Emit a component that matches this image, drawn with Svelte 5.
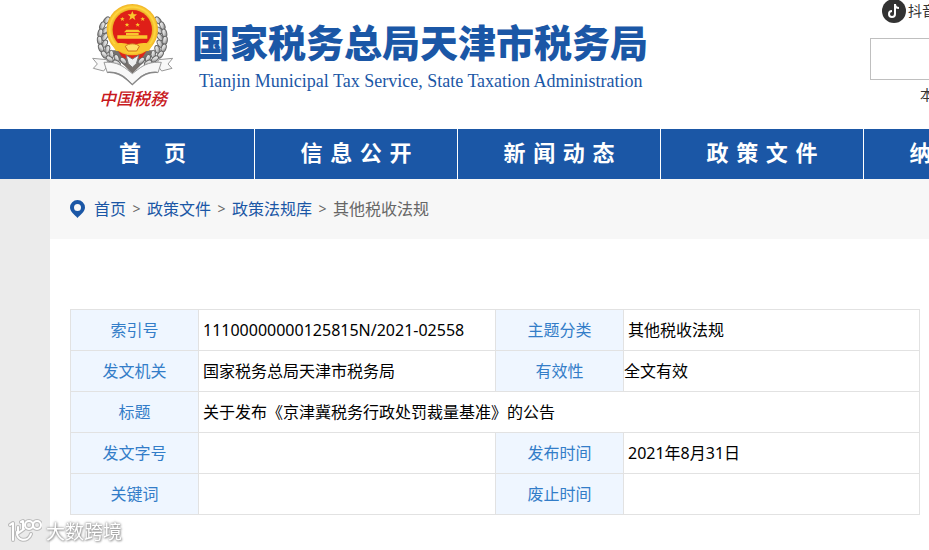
<script lang="ts">
	const navItems = ['首   页', '信 息 公 开', '新 闻 动 态', '政 策 文 件', '纳 税 服 务'];

	const crumbs = ['首页', '政策文件', '政策法规库'];

	// Wreath leaves down the right side of the emblem, mirrored for the left
	const leaves = [
		[234, 60, -40],
		[247, 76, -25],
		[238, 90, -50],
		[253, 98, -15],
		[240, 110, -40],
		[255, 120, 5],
		[240, 130, -30],
		[251, 143, 20],
		[232, 147, -15],
		[241, 163, 35],
		[220, 162, 0],
		[225, 176, 50],
		[204, 174, 15],
		[204, 188, 60],
		[184, 181, 40]
	];
</script>

<header class="header">
	<div class="emblem">
		<svg width="82" height="84" viewBox="36 8 246 252" aria-hidden="true">
			<defs>
				<linearGradient id="silver" x1="0" y1="0" x2="1" y2="1">
					<stop offset="0" stop-color="#ffffff" />
					<stop offset="0.5" stop-color="#d2d2d2" />
					<stop offset="1" stop-color="#666666" />
				</linearGradient>
				<radialGradient id="gold">
					<stop offset="0.75" stop-color="#e8a11c" />
					<stop offset="0.88" stop-color="#ffd840" />
					<stop offset="1" stop-color="#efb021" />
				</radialGradient>
				<g id="wreath">
					{#each leaves as [x, y, angle]}
						<ellipse
							cx={x}
							cy={y}
							rx="7"
							ry="12"
							transform="rotate({angle} {x} {y})"
							fill="url(#silver)"
							stroke="#666"
							stroke-width="3"
						/>
					{/each}
				</g>
			</defs>
			<path d="M88 150 L157 220 L226 150 Z" fill="#77716d" />
			<use href="#wreath" />
			<use href="#wreath" transform="translate(314 0) scale(-1 1)" />
			<path d="M112 148h90l-14 22-31 14-31-14z" fill="#dd261b" />
			<circle cx="157" cy="88" r="77" fill="url(#gold)" />
			<circle cx="157" cy="88" r="59" fill="#df1f18" />
			<g fill="#f9c72d">
				<path d="M157 32 L161 42 L171 42 L163 49 L166 59 L157 53 L148 59 L151 49 L143 42 L153 42 Z" />
				<path d="M127 50l2 4 5 0-4 3 2 5-5-3-4 3 1-5-4-3 5 0z" />
				<path d="M188 50l2 4 5 0-4 3 2 5-5-3-4 3 1-5-4-3 5 0z" />
				<path d="M141 67l2 4 5 0-4 3 2 5-5-3-4 3 1-5-4-3 5 0z" />
				<path d="M173 67l2 4 5 0-4 3 2 5-5-3-4 3 1-5-4-3 5 0z" />
				<path d="M139 88h36l7 8h-50zM138 98h38v6h-38zM112 105h90v10h-90z" />
				<path d="M97 134c22-10 40-6 60 1 22-7 38-11 61-1l-12 18c-15-2-23 5-49 4-26 1-32-6-49-4z" />
				<path d="M136 138c9-10 33-10 42 0l-8 14h-26z" fill="#ffdf65" stroke="#cf701c" stroke-width="3" />
			</g>
			<path d="M138 164l19 12 20-12-8 26-12 11-12-11z" fill="#eee" stroke="#777" stroke-width="3" />
			<g fill="#f8f8f8" stroke="#999" stroke-width="3" stroke-linejoin="round">
				<path d="M38 174l42 4 6 14-15 20-31-8 12-13z" />
				<path d="M278 174l-42 4-6 14 15 20 31-8-12-13z" />
				<path
					d="M72 186c29-2 49 5 70 22l15 12 16-12c21-17 41-24 71-22l-10 31c-27-4-45 5-62 21l-15 14-14-14c-18-16-35-25-61-21z"
				/>
			</g>
			<path
				d="M82 216c28-2 44 8 60 23l15 14 15-14c15-15 33-25 60-23"
				fill="none"
				stroke="#888"
				stroke-width="4"
			/>
		</svg>
		<span class="emblem-text">中国税務</span>
	</div>

	<div class="titles">
		<h1>国家税务总局天津市税务局</h1>
		<p>Tianjin Municipal Tax Service, State Taxation Administration</p>
	</div>

	<div class="tools">
		<a class="douyin" href="#douyin">
			<svg width="24" height="24" viewBox="0 0 24 24" aria-hidden="true">
				<circle cx="12" cy="12" r="12" fill="#333" />
				<path
					d="M13 5v10a3 3 0 1 1-3-3M13 5c0 3 2 4 4 4"
					fill="none"
					stroke="#fff"
					stroke-width="2"
				/>
			</svg>
			抖音
		</a>
		<input type="text" aria-label="搜索" />
		<span class="site">本站</span>
	</div>
</header>

<nav class="nav">
	{#each navItems as item}
		<a href="#nav">{item}</a>
	{/each}
</nav>

<main class="page">
	<div class="content">
		<div class="crumbs">
			<svg width="15" height="18" viewBox="0 0 15 18" aria-hidden="true">
				<path
					fill="#1b57a6"
					fill-rule="evenodd"
					d="M7.500 0A7.500 7.500 0 0 0 0 7.500C0 12 5 15 7.500 18 10 15 15 12 15 7.500A7.500 7.500 0 0 0 7.500 0zM7.500 4a3.500 3.500 0 1 1 0 7 3.500 3.500 0 0 1 0-7z"
				/>
			</svg>
			{#each crumbs as crumb}
				<a href="#crumb">{crumb}</a>
				<span class="sep">&gt;</span>
			{/each}
			<span>其他税收法规</span>
		</div>

		<div class="detail">
			<table>
				<colgroup>
					<col class="label-col" />
					<col class="value-col" />
					<col class="label-col" />
					<col />
				</colgroup>
				<tbody>
					<tr>
						<th scope="row">索引号</th>
						<td>11100000000125815N/2021-02558</td>
						<th scope="row">主题分类</th>
						<td>其他税收法规</td>
					</tr>
					<tr>
						<th scope="row">发文机关</th>
						<td>国家税务总局天津市税务局</td>
						<th scope="row">有效性</th>
						<td class="flush">全文有效</td>
					</tr>
					<tr>
						<th scope="row">标题</th>
						<td colspan="3">关于发布《京津冀税务行政处罚裁量基准》的公告</td>
					</tr>
					<tr>
						<th scope="row">发文字号</th>
						<td></td>
						<th scope="row">发布时间</th>
						<td>2021年8月31日</td>
					</tr>
					<tr>
						<th scope="row">关键词</th>
						<td></td>
						<th scope="row">废止时间</th>
						<td></td>
					</tr>
				</tbody>
			</table>
		</div>
	</div>
</main>

<div class="watermark">
	<svg width="34" height="28" viewBox="0 0 34 28" aria-hidden="true">
		<defs>
			<path
				id="mark"
				d="M2 7l3-2v17M10 9v5M16 11l-7 5M9 14c-1 9 11 11 14 2M13 4l2-1v8M21 3a4 4 0 1 0 0 8 4 4 0 1 0 0-8M29 3a4 4 0 1 0 0 8 4 4 0 1 0 0-8"
			/>
		</defs>
		<g fill="none" stroke-linecap="round" stroke-linejoin="round">
			<use href="#mark" stroke="#bbb" stroke-width="4" />
			<use href="#mark" stroke="#fff" stroke-width="2" />
		</g>
	</svg>
	<span>大数跨境</span>
</div>

<style>
	:global(body) {
		min-height: 100vh;
		overflow-x: hidden;
		background: linear-gradient(to right, #ebebeb 50px, #fff 50px);
		font-family: 'Noto Sans', 'Noto Sans CJK SC', sans-serif;
		font-size: 16px;
		color: #000;
	}

	a {
		color: inherit;
		text-decoration: none;
	}

	.header {
		display: flex;
		height: 129px;
		padding-left: 92px;
		overflow: hidden;
		background: #fff;
	}

	.emblem {
		display: flex;
		flex: none;
		flex-direction: column;
		align-items: center;
		width: 82px;
		padding-top: 3px;
	}

	.emblem-text {
		font-size: 17px;
		font-style: italic;
		font-weight: 500;
		line-height: 24px;
		color: #c8191e;
	}

	.titles {
		flex: none;
		padding: 16px 0 0 18px;
		color: #1b57a6;
		white-space: nowrap;
	}

	.titles h1 {
		margin: 0;
		font-family: 'Noto Sans CJK SC', sans-serif;
		font-size: 38px;
		font-weight: 900;
		line-height: 50px;
	}

	.titles p {
		margin: 0;
		padding-left: 7px;
		font-family: 'Liberation Serif', serif;
		font-size: 18px;
		line-height: 30px;
	}

	.tools {
		display: flex;
		flex: none;
		flex-direction: column;
		width: 320px;
		margin-left: 222px;
		font-size: 14px;
		color: #333;
	}

	.douyin {
		display: flex;
		align-items: center;
		gap: 2px;
		height: 22px;
		padding-left: 12px;
		line-height: 22px;
	}

	.tools input {
		box-sizing: border-box;
		height: 42px;
		margin-top: 16px;
		padding: 0 10px;
		border: 1px solid #bfbfbf;
		background: #fff;
		font: inherit;
	}

	.site {
		padding-left: 50px;
		line-height: 30px;
	}

	.nav {
		display: flex;
		height: 50px;
		padding-left: 50px;
		overflow: hidden;
		background: #1b57a6;
	}

	.nav a {
		flex: none;
		box-sizing: border-box;
		width: 203px;
		border-left: 1px solid #fff;
		font-family: 'DejaVu Sans', 'Noto Sans CJK SC', sans-serif;
		font-size: 22px;
		font-weight: 700;
		line-height: 50px;
		text-align: center;
		white-space: pre;
		color: #fff;
	}

	.nav a:first-child {
		width: 204px;
	}

	.page {
		padding-left: 50px;
	}

	.content {
		background: #fff;
	}

	.crumbs {
		display: flex;
		align-items: center;
		height: 60px;
		padding-left: 20px;
		background: #f7f7f7;
		line-height: 24px;
		color: #666;
	}

	.crumbs svg {
		margin-right: 9px;
	}

	.crumbs a {
		color: #1b57a6;
	}

	.sep {
		width: 21px;
		font-size: 14px;
		text-align: center;
	}

	.detail {
		padding: 70px 9px 20px 20px;
	}

	table {
		width: 100%;
		border-collapse: collapse;
		table-layout: fixed;
	}

	.label-col {
		width: 128px;
	}

	.value-col {
		width: 297px;
	}

	th,
	td {
		box-sizing: border-box;
		height: 41px;
		padding: 0 4px;
		border: 1px solid #e2e2e2;
		line-height: 24px;
	}

	th {
		background: #eff6ff;
		font-weight: 400;
		text-align: center;
		color: #337dc8;
	}

	td {
		text-align: left;
	}

	td.flush {
		padding-left: 0;
	}

	.watermark {
		position: fixed;
		bottom: 4px;
		left: 8px;
		display: flex;
		align-items: center;
		gap: 4px;
		font-size: 19px;
		line-height: 26px;
		color: #fff;
		text-shadow:
			0 0 2px #999,
			0 0 3px #999,
			1px 1px 2px #aaa;
	}
</style>
